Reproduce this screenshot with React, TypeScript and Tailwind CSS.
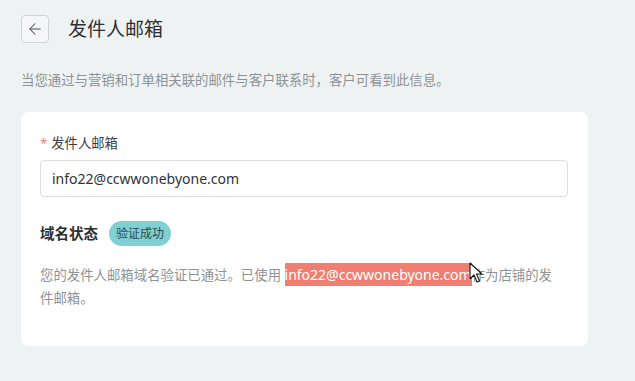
import React from 'react'
import { ArrowLeft } from 'lucide-react'

const font = { fontFamily: '"Noto Sans", "Noto Sans CJK SC", sans-serif' }

function Cursor() {
  return (
    <svg className="absolute left-[469px] top-[262px]" width="14" height="22" viewBox="0 0 14 22">
      <path d="M1 1 L1 17 L5 13 L8 20 L10.5 19 L7.5 12 L13 12 Z" fill="#fff" stroke="#111" strokeWidth="1.1" strokeLinejoin="round" />
    </svg>
  )
}

export default function App() {
  return (
    <div className="relative min-h-[381px] w-[635px] bg-[#eff2f3] px-[21px] pt-[15px]" style={font}>
      <div className="flex h-[28px] items-center gap-[19px]">
        <button className="flex h-[28px] w-[28px] items-center justify-center rounded-[4px] border border-[#cfd3d6] bg-[#f4f6f7] text-[#4a4e52]">
          <ArrowLeft className="h-[18px] w-[18px]" strokeWidth={1.4} />
        </button>
        <h1 className="text-[19px] leading-[28px] text-[#2b2f33]">发件人邮箱</h1>
      </div>

      <p className="mt-[27px] text-[13.4px] leading-[20px] text-[#8d9296]">
        当您通过与营销和订单相关联的邮件与客户联系时，客户可看到此信息。
      </p>

      <div className="mt-[22px] h-[234px] w-[567px] rounded-[8px] bg-white pl-[19px] pr-[20px] pt-[21px]">
        <div className="flex items-center gap-[4px] text-[13.3px] leading-[20px] text-[#3a3e42]">
          <span className="text-[#f07f72]">*</span>
          <span>发件人邮箱</span>
        </div>
        <div className="mt-[7px] flex h-[37px] items-center rounded-[4px] border border-[#dcdfe2] px-[11px] text-[14px] text-[#2f3337]">
          info22@ccwwonebyone.com
        </div>

        <div className="mt-[24px] flex h-[25px] items-center gap-[11px]">
          <span className="text-[14.5px] font-bold text-[#2b2f33]">域名状态</span>
          <span className="flex h-[25px] items-center rounded-full bg-[#80cfd3] px-[7px] text-[12px] text-[#2a4a4c]">验证成功</span>
        </div>

        <p className="mt-[17px] w-[518px] text-[13.4px] leading-[23px] text-[#8d9296]">
          <span>您的发件人邮箱域名验证已通过。已使用 </span>
          <span className="bg-[#f07f72] py-[2px] text-[14px] text-white">info22@ccwwonebyone.com</span>
          <span>作为店铺的发件邮箱。</span>
        </p>
      </div>

      <Cursor />
    </div>
  )
}
